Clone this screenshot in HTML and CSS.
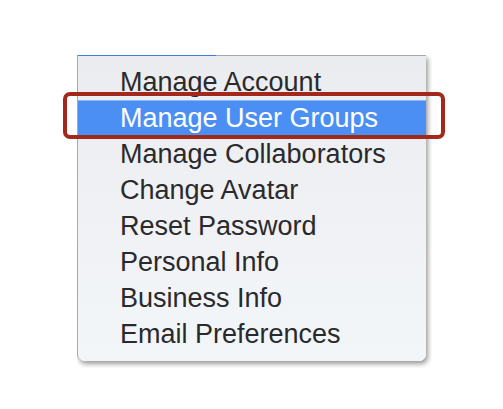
FILE: index.html
```html
<!DOCTYPE html>
<html>
<head>
<meta charset="utf-8">
<link rel="stylesheet" href="styles.css">
</head>
<body>
<div class="stage">
  <div class="clip">
    <div class="menu">
      <div class="topline"><span class="blue"></span></div>
      <ul class="items">
        <li class="item">Manage Account</li>
        <li class="item active">Manage User Groups</li>
        <li class="item">Manage Collaborators</li>
        <li class="item">Change Avatar</li>
        <li class="item">Reset Password</li>
        <li class="item">Personal Info</li>
        <li class="item">Business Info</li>
        <li class="item">Email Preferences</li>
      </ul>
    </div>
  </div>
  <div class="callout"></div>
</div>
</body>
</html>
```
FILE: styles.css
```css
html, body {
  margin: 0;
  padding: 0;
  background: #ffffff;
}
.stage {
  position: relative;
  width: 503px;
  height: 409px;
  padding: 55px 0 0 77px;
  box-sizing: border-box;
}
.clip {
  width: 355px;
  height: 313px;
  overflow: hidden;
}
.menu {
  width: 349px;
  height: 306px;
  box-sizing: border-box;
  background: linear-gradient(#ebecef, #f3f6f9);
  border-left: 1px solid #a9a9ab;
  border-radius: 0 0 7px 7px;
  box-shadow: 2px 3px 5px rgba(0,0,0,0.4);
  display: flex;
  flex-direction: column;
}
.topline {
  height: 1px;
  background: #a8a8aa;
  display: flex;
}
.blue {
  width: 138px;
  height: 1px;
  background: #3d7ddc;
}
.items {
  list-style: none;
  margin: 0;
  padding: 8px 0 0 0;
}
.item {
  height: 36px;
  line-height: 36px;
  padding-left: 42px;
  font-family: "Liberation Sans", Arial, sans-serif;
  font-size: 27px;
  color: #2a2a2c;
}
.item.active {
  background: #4c8ff4;
  color: #ffffff;
  box-shadow: inset 0 1px 0 #8ab6f7;
}
.callout {
  position: absolute;
  left: 63px;
  top: 92px;
  width: 382px;
  height: 47px;
  box-sizing: border-box;
  border: 4px solid #a3281c;
  border-radius: 7px;
}
```
